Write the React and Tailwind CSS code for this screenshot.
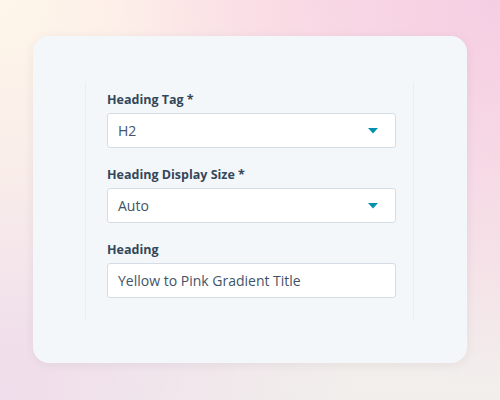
const fields = [
  { label: 'Heading Tag *', value: 'H2', select: true },
  { label: 'Heading Display Size *', value: 'Auto', select: true },
  { label: 'Heading', value: 'Yellow to Pink Gradient Title', select: false },
];

function Caret() {
  return (
    <svg width="10" height="6" viewBox="0 0 10 6" className="shrink-0">
      <path d="M0 0 H10 L5 5.5 Z" fill="#0091ae" />
    </svg>
  );
}

export default function App() {
  return (
    <div
      className="h-[400px] w-[500px] pl-[33px] pr-[33px] pt-[36px] pb-[37px] bg-[radial-gradient(circle_at_100%_0%,#f5cee3_0%,rgba(245,206,227,0)_60%),radial-gradient(circle_at_0%_0%,#fdf6ea_0%,rgba(253,246,234,0)_50%),radial-gradient(circle_at_0%_100%,#f0ddeb_0%,rgba(240,221,235,0)_55%),linear-gradient(180deg,#fde3e6,#f1efec)]"
      style={{ fontFamily: '"Open Sans", "Noto Sans", sans-serif' }}
    >
      <div className="h-full rounded-2xl bg-[#f4f7fa] shadow-[0_2px_12px_rgba(0,0,0,0.06)] pl-[52px] pr-[53px] pt-[46px]">
        <div className="border-x border-[#e9eef3] pl-[21px] pr-[17px] pt-[10px] pb-[21px] flex flex-col gap-[19px]">
          {fields.map(f => (
            <div key={f.label} className="flex flex-col gap-[5px]">
              <div className="text-[12.5px] leading-4 font-bold text-[#33475b]">{f.label}</div>
              <div className="h-[35px] rounded-[3px] border border-[#d4dde6] bg-white flex items-center pl-[10px] pr-[17px]">
                <span className="flex-1 text-[14px] text-[#3f5468]">{f.value}</span>
                {f.select && <Caret />}
              </div>
            </div>
          ))}
        </div>
      </div>
    </div>
  );
}
